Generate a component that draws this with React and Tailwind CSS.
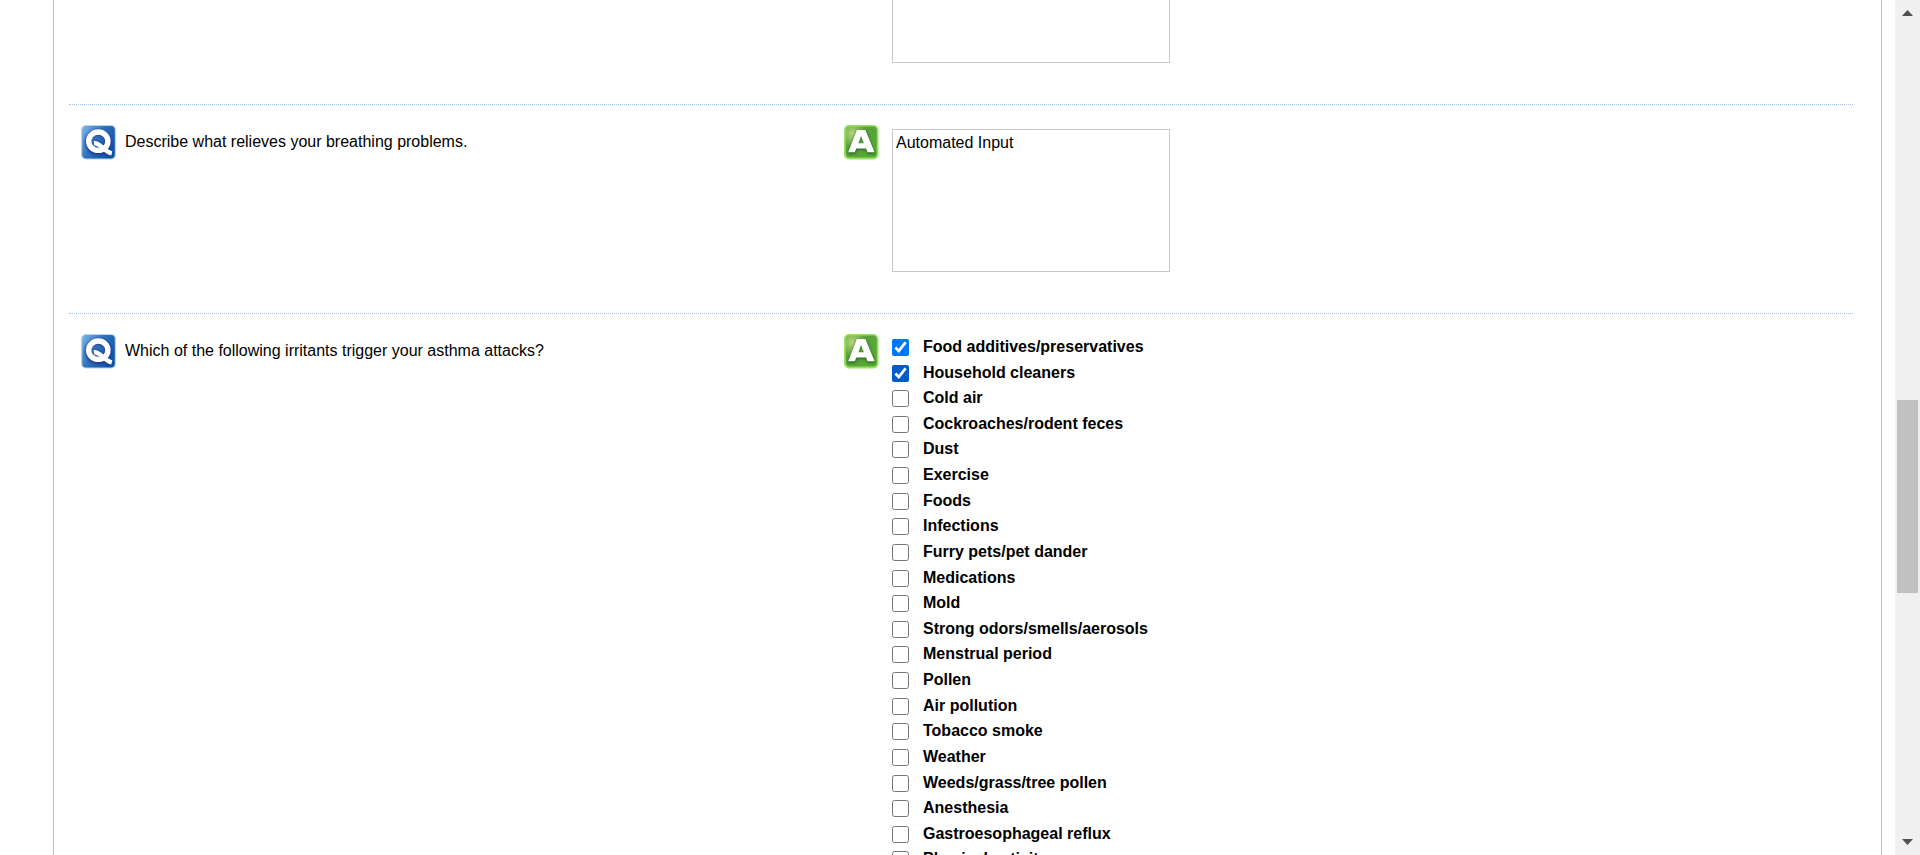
import React from "react";

const irritants = [
  "Food additives/preservatives",
  "Household cleaners",
  "Cold air",
  "Cockroaches/rodent feces",
  "Dust",
  "Exercise",
  "Foods",
  "Infections",
  "Furry pets/pet dander",
  "Medications",
  "Mold",
  "Strong odors/smells/aerosols",
  "Menstrual period",
  "Pollen",
  "Air pollution",
  "Tobacco smoke",
  "Weather",
  "Weeds/grass/tree pollen",
  "Anesthesia",
  "Gastroesophageal reflux",
  "Physical activity",
];

function QuestionIcon() {
  return (
    <svg className="h-[35px] w-[35px] shrink-0" viewBox="0 0 35 35" aria-hidden="true">
      <defs>
        <linearGradient id="q-fill" x1="0" y1="0" x2="1" y2="0.6">
          <stop offset="0" stopColor="#7db6ea" />
          <stop offset="0.5" stopColor="#2f72bd" />
          <stop offset="1" stopColor="#0f56a6" />
        </linearGradient>
        <filter id="q-soft" x="-20%" y="-20%" width="140%" height="140%">
          <feGaussianBlur stdDeviation="0.9" />
        </filter>
      </defs>
      <rect x="0" y="0" width="35" height="34.5" rx="5" fill="#b5d4ef" />
      <rect x="1.2" y="1" width="32.6" height="32.5" rx="4" fill="url(#q-fill)" />
      <g fill="none" stroke="#1f2a86" strokeOpacity="0.8" strokeWidth="6" filter="url(#q-soft)">
        <ellipse cx="17" cy="17.3" rx="10" ry="9.8" />
        <path d="M13.5 18.5C20 18 22 26 29.5 29" />
      </g>
      <g fill="none" stroke="#fff" strokeWidth="5.4">
        <ellipse cx="17.3" cy="16.2" rx="9.6" ry="9.2" />
        <path strokeWidth="4.4" d="M13 18.2C20 17.6 21.5 26 30.8 28.4" />
      </g>
    </svg>
  );
}

function AnswerIcon() {
  return (
    <svg className="h-[35px] w-[35px] shrink-0" viewBox="0 0 35 35" aria-hidden="true">
      <defs>
        <radialGradient id="a-fill" cx="0.22" cy="0.22" r="0.9">
          <stop offset="0" stopColor="#b5d77a" />
          <stop offset="0.5" stopColor="#5a9f3c" />
          <stop offset="1" stopColor="#55a935" />
        </radialGradient>
        <filter id="a-soft" x="-20%" y="-20%" width="140%" height="140%">
          <feGaussianBlur stdDeviation="0.9" />
        </filter>
      </defs>
      <rect x="0" y="0" width="34.5" height="34.5" rx="5" fill="#97e062" />
      <rect x="1.8" y="1.6" width="31" height="31" rx="4" fill="url(#a-fill)" />
      <path
        filter="url(#a-soft)"
        fill="#24601c"
        fillOpacity="0.85"
        fillRule="evenodd"
        d="M12.5 5.5H22L31.5 29H23.5L22 25H13L11.3 29H3.5ZM17.3 12L15 19H20Z"
      />
      <path
        fill="#fff"
        fillRule="evenodd"
        d="M12.8 5H21.4L30.6 27.3H23.6L22.1 23.4H12.3L10.8 27.3H4.2ZM17 11L14.5 18.2H19.8Z"
      />
    </svg>
  );
}

function Row({ children }) {
  return (
    <section className="grid grid-cols-[762fr_1022fr] border-b border-dotted border-[#a3c2e0] pt-5 pb-[41px]">
      {children}
    </section>
  );
}

function Question({ children }) {
  return (
    <div className="flex items-start gap-[9px] pl-3">
      <QuestionIcon />
      <div className="pt-2">{children}</div>
    </div>
  );
}

function Answer({ children }) {
  return (
    <div className="col-start-2 flex items-start gap-[13px] pl-[13px]">
      <AnswerIcon />
      {children}
    </div>
  );
}

function AnswerBox(props) {
  return (
    <textarea
      {...props}
      className="mt-1 block h-[143px] w-[278px] resize-none border border-[#c8c8c8] bg-white px-[3px] py-1 outline-none"
    />
  );
}

function ScrollBar() {
  return (
    <div
      className="flex h-full w-[25px] shrink-0 flex-col items-center justify-between bg-[#f0f0f0] py-[10px]"
      aria-hidden="true"
    >
      <svg className="h-[6px] w-[11px]" viewBox="0 0 11 6">
        <path d="M5.5 0L11 6H0Z" fill="#505050" />
      </svg>
      <div className="flex w-[21px] grow flex-col">
        <div className="grow-[384]" />
        <div className="grow-[193] bg-[#c1c1c1]" />
        <div className="grow-[246]" />
      </div>
      <svg className="h-[6px] w-[11px]" viewBox="0 0 11 6">
        <path d="M0 0H11L5.5 6Z" fill="#505050" />
      </svg>
    </div>
  );
}

export default function App() {
  return (
    <div className="flex h-screen overflow-hidden bg-white font-['Liberation_Sans',Arial,sans-serif] text-base leading-[18px] text-black">
      <main className="mr-[13px] ml-[53px] h-full grow overflow-hidden border-x border-[#c1c1c1] pr-7 pl-[15px]">
        <div className="-mt-[104px]">
          <Row>
            <Answer>
              <AnswerBox aria-label="Answer" />
            </Answer>
          </Row>
          <Row>
            <Question>
              <label htmlFor="relieves">Describe what relieves your breathing problems.</label>
            </Question>
            <Answer>
              <AnswerBox id="relieves" defaultValue="Automated Input" />
            </Answer>
          </Row>
          <Row>
            <Question>
              <p id="irritants">Which of the following irritants trigger your asthma attacks?</p>
            </Question>
            <Answer>
              <ul aria-labelledby="irritants" className="grid h-[538px] auto-rows-fr">
                {irritants.map((name, i) => (
                  <li key={name}>
                    <label className="flex items-start gap-[14px] pt-1 font-bold">
                      <input
                        type="checkbox"
                        defaultChecked={i < 2}
                        className={`mt-px h-[17px] w-[17px] ${i === 1 ? "accent-[#005cc8]" : "accent-[#0075ff]"}`}
                      />
                      <span>{name}</span>
                    </label>
                  </li>
                ))}
              </ul>
            </Answer>
          </Row>
        </div>
      </main>
      <ScrollBar />
    </div>
  );
}
